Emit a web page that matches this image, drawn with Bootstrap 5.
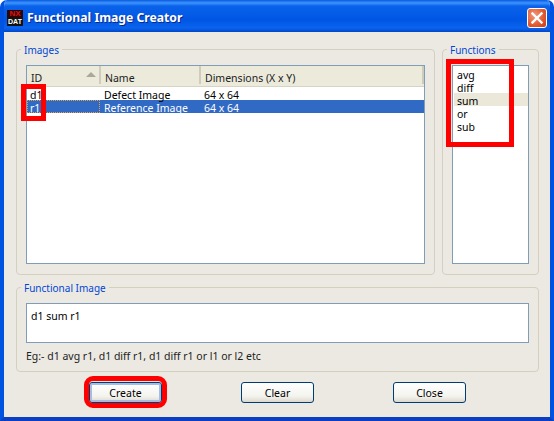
<!DOCTYPE html>
<html lang="en">
<head>
    <meta charset="UTF-8">
    <meta name="viewport" content="width=device-width, initial-scale=1.0">
    <title>Functional Image Creator</title>
    <link href="https://cdn.jsdelivr.net/npm/bootstrap@5.3.0/dist/css/bootstrap.min.css" rel="stylesheet">
    <style>
        html, body { margin: 0; background: #fff; overflow: hidden; }
        body { font: 10.5px/13px "Noto Sans", sans-serif; color: #000; }
        .xp-window { position: relative; width: 554px; height: 421px; background: #ece9e3; border-radius: 7px 7px 0 0; overflow: hidden;
            border: solid #0052e0; border-width: 0 4px 4px; border-bottom-color: #0a3fc4; }
        .xp-title { height: 32px; margin: 0 -4px; padding: 4px 7px 0 7px; border-radius: 7px 7px 0 0;
            background: linear-gradient(180deg, #0a5be0 0, #3d95ff 3px, #0a62ea 6px, #0056e4 20px, #0a64ee 28px, #0046c8 32px); }
        .xp-title-text { font: bold 12.2px/1 "Noto Sans", sans-serif; color: #fff; text-shadow: 1px 1px 0 #0a2a8c; margin-left: 4px; }
        .nx-logo { width: 16px; height: 16px; background: #111; text-align: center; font-family: "Liberation Sans", sans-serif; font-weight: bold; }
        .nx-top { height: 8px; font-size: 8px; line-height: 8px; color: #e01010; background: #2a0808; }
        .nx-bottom { height: 8px; font-size: 7px; line-height: 8px; color: #fff; }
        .xp-close { width: 20px; height: 20px; border: 1px solid #fff; border-radius: 3px; background: radial-gradient(circle at 35% 35%, #f09a7c, #e2582e 60%, #c63c18); }
        .xp-body { padding: 10px 11px 0 12px; }
        .xp-group { margin: 0; padding: 0 9px; border: 1px solid #d3d0c0; border-radius: 4px; min-width: 0; }
        .xp-group legend { float: none; width: auto; margin: 0 0 0 -5px; padding: 2px 3px 0; font: 10px/13px "Noto Sans", sans-serif; color: #0046d5; }
        .grp-images { width: 419px; height: 233px; }
        .grp-funcs { width: 97px; height: 233px; margin-left: 7px; }
        .grp-image { width: 523px; height: 92px; margin-top: 5px; }
        .xp-box { background: #fff; border: 1px solid #7f9db9; }
        .img-box { height: 199px; margin-top: 8px; }
        .img-head { height: 21px; background: #ebeadb; border-bottom: 1px solid #d6d3c4; color: #222; }
        .img-head > div { padding: 6px 0 0 4px; border-right: 2px solid #cfccbc; height: 18px; line-height: 12px; }
        .img-row { height: 13px; line-height: 16px; padding: 0; }
        .col-id { width: 74px; padding-left: 3px; }
        .col-name { width: 100px; padding-left: 4px; }
        .img-row .col-id { width: 73px; }
        .img-row .col-name { width: 104px; }
        .img-row.is-sel { background: #316ac5; color: #fff; }
        .img-row.is-sel .col-id { outline: 1px dotted #e8a040; outline-offset: -1px; }
        .sort-arrow { float: right; margin: 0 3px 0 0; width: 0; height: 0; border: 5px solid transparent; border-top: 0; border-bottom: 5px solid #aca899; }
        .func-box { height: 199px; margin-top: 8px; padding: 1px 0 0 1px; }
        .func-item { height: 13px; line-height: 16px; padding-left: 3px; }
        .func-item.is-on { background: #ebe8da; }
        .func-input { height: 40px; margin-top: 8px; padding: 6px 4px; }
        .xp-hint { margin: 7px 0 0 0; color: #222; }
        .xp-btn-row { padding-top: 10px; padding-left: 73px; gap: 79px; }
        .xp-btn { width: 73px; height: 21px; padding: 1px 0 0; font: 10.5px/1 "Noto Sans", sans-serif; color: #000; border: 1px solid #003c74; border-radius: 3px;
            background: linear-gradient(180deg, #fff, #f3f3ee 70%, #dcd8cc); }
        .xp-btn.is-default { box-shadow: inset 0 0 0 2px #a6bde0; }
        .mark-box { position: absolute; border: 5px solid #f00; }
        .mark-ids { left: 17px; top: 84px; width: 25px; height: 37px; }
        .mark-funcs { left: 442px; top: 59px; width: 68px; height: 88px; }
        .mark-create { left: 80px; top: 376px; width: 83px; height: 32px; border-radius: 9px; }
    </style>
</head>
<body>
    <div class="xp-window">
        <div class="xp-title d-flex align-items-center">
            <div class="nx-logo flex-shrink-0">
                <div class="nx-top">NX</div>
                <div class="nx-bottom">DAT</div>
            </div>
            <div class="xp-title-text flex-grow-1">Functional Image Creator</div>
            <div class="xp-close d-flex align-items-center justify-content-center">
                <svg width="12" height="12" viewBox="0 0 12 12"><path d="M1.5 1.5l9 9M10.5 1.5l-9 9" stroke="#fff" stroke-width="2.4" stroke-linecap="square"/></svg>
            </div>
        </div>

        <div class="xp-body">
            <div class="d-flex">
                <fieldset class="xp-group grp-images">
                    <legend>Images</legend>
                    <div class="xp-box img-box">
                        <div class="img-head d-flex">
                            <div class="col-id"><span class="sort-arrow"></span>ID</div>
                            <div class="col-name">Name</div>
                            <div class="flex-grow-1">Dimensions (X x Y)</div>
                        </div>
                        <div class="img-row d-flex">
                            <div class="col-id">d1</div>
                            <div class="col-name">Defect Image</div>
                            <div>64 x 64</div>
                        </div>
                        <div class="img-row is-sel d-flex">
                            <div class="col-id">r1</div>
                            <div class="col-name">Reference Image</div>
                            <div>64 x 64</div>
                        </div>
                    </div>
                </fieldset>
                <fieldset class="xp-group grp-funcs">
                    <legend>Functions</legend>
                    <div class="xp-box func-box">
                        <div class="func-item">avg</div>
                        <div class="func-item">diff</div>
                        <div class="func-item is-on">sum</div>
                        <div class="func-item">or</div>
                        <div class="func-item">sub</div>
                    </div>
                </fieldset>
            </div>

            <fieldset class="xp-group grp-image">
                <legend>Functional Image</legend>
                <div class="xp-box func-input">d1 sum r1</div>
                <p class="xp-hint">Eg:- d1 avg r1, d1 diff r1, d1 diff r1 or l1 or l2 etc</p>
            </fieldset>

            <div class="xp-btn-row d-flex">
                <button type="button" class="xp-btn is-default">Create</button>
                <button type="button" class="xp-btn">Clear</button>
                <button type="button" class="xp-btn">Close</button>
            </div>
        </div>

        <div class="mark-box mark-ids"></div>
        <div class="mark-box mark-funcs"></div>
        <div class="mark-box mark-create"></div>
    </div>

    <script src="https://cdn.jsdelivr.net/npm/bootstrap@5.3.0/dist/js/bootstrap.bundle.min.js"></script>
</body>
</html>
